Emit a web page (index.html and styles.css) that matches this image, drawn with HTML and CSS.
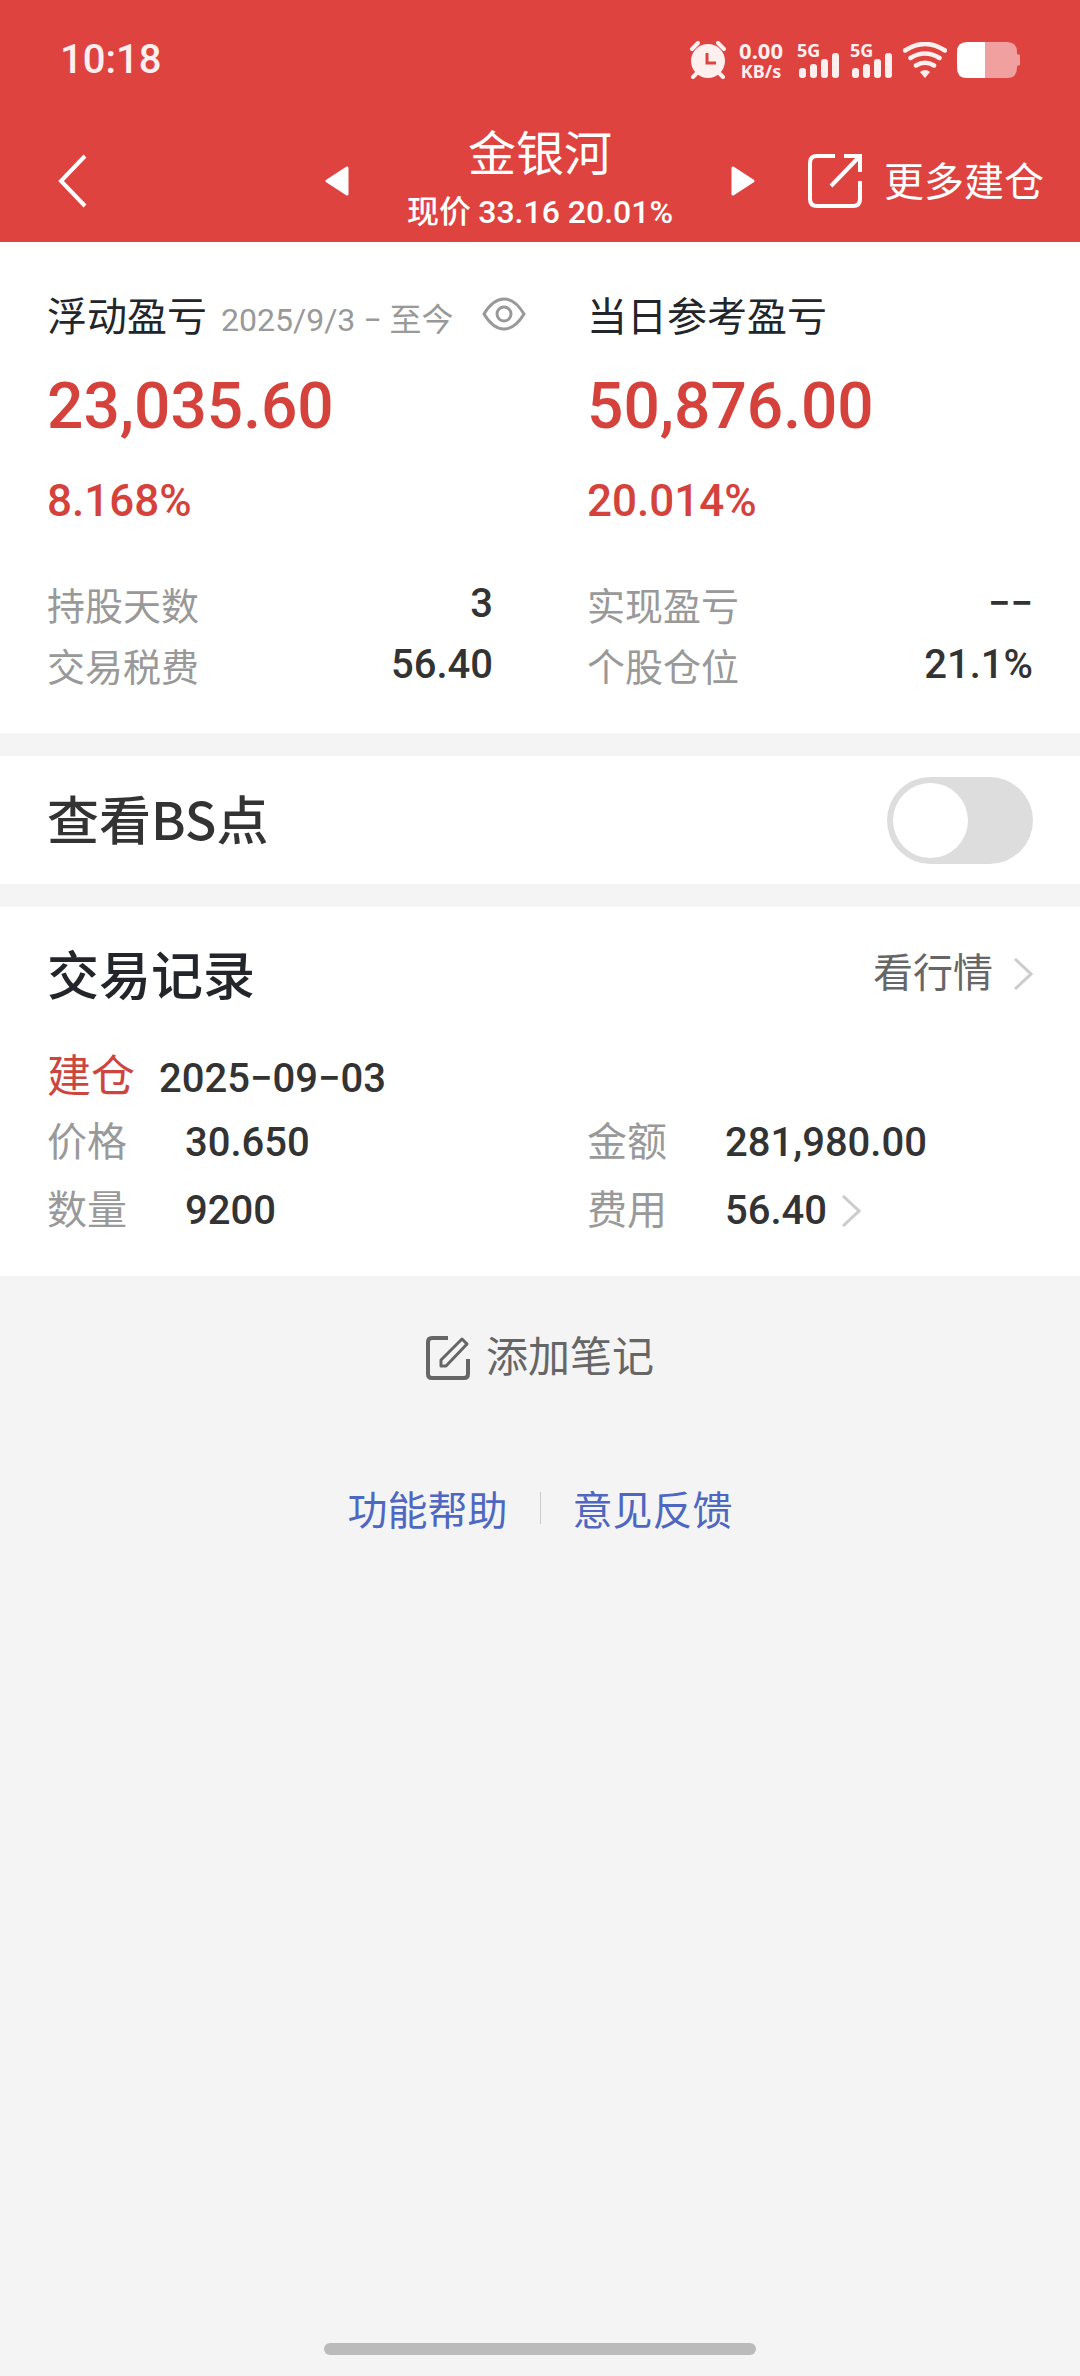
FILE: index.html
```html
<!DOCTYPE html>
<html lang="zh-CN">
  <head>
    <meta charset="UTF-8" />
    <meta name="viewport" content="width=device-width, initial-scale=1.0" />
    <title>金银河</title>
    <link rel="stylesheet" href="styles.css" />
  </head>
  <body>
    <header class="header">
      <div class="status">
        <span class="time">10:18</span>
        <div class="status_icons">
          <svg class="alarm" width="38" height="38" viewBox="0 0 38 38">
            <path d="M3 8l6-6M35 8l-6-6M8 32l-4 4M30 32l4 4" stroke="#ffefef" stroke-width="4" stroke-linecap="round" />
            <circle cx="19" cy="20" r="17" fill="#ffefef" />
            <path d="M18 12v10h9" fill="none" stroke="#de4340" stroke-width="3" />
          </svg>
          <div class="speed"><span>0.00</span><small>KB/s</small></div>
          <div class="signal">
            <span>5G</span>
            <svg width="42" height="36" viewBox="0 0 42 36" fill="#ffefef">
              <rect x="2" y="26" width="7" height="10" rx="3" />
              <rect x="13" y="22" width="7" height="14" rx="3" />
              <rect x="24" y="17" width="7" height="19" rx="3" />
              <rect x="35" y="11" width="7" height="25" rx="3" />
            </svg>
          </div>
          <div class="signal">
            <span>5G</span>
            <svg width="42" height="36" viewBox="0 0 42 36" fill="#ffefef">
              <rect x="2" y="26" width="7" height="10" rx="3" />
              <rect x="13" y="22" width="7" height="14" rx="3" />
              <rect x="24" y="17" width="7" height="19" rx="3" />
              <rect x="35" y="11" width="7" height="25" rx="3" />
            </svg>
          </div>
          <svg class="wifi" width="44" height="36" viewBox="0 0 44 36">
            <path d="M2 8.500Q22-4.500 42 8.500M7.500 16Q22 7 36.500 16M13 23.500Q22 18 31 23.500" fill="none" stroke="#ffefef" stroke-width="4.500" stroke-linecap="round" />
            <path d="M17 30q5-4 10 0l-5 6z" fill="#ffefef" />
          </svg>
          <svg class="battery" width="63" height="36" viewBox="0 0 63 36">
            <path d="M28 0h22q10 0 10 10v2l3 1v10l-3 1v2q0 10-10 10H28z" fill="#f0a09f" />
            <path d="M28 0H10Q0 0 0 10v16q0 10 10 10h18z" fill="#fff" />
          </svg>
        </div>
      </div>
      <nav class="nav">
        <button class="back" aria-label="返回">
          <svg width="30" height="54" viewBox="0 0 30 54"><path d="M27 2L3 27l24 25" fill="none" stroke="#fff" stroke-width="4" /></svg>
        </button>
        <div class="stock">
          <button aria-label="上一只">
            <svg width="24" height="30" viewBox="0 0 24 30"><path d="M2 15L22 2v26z" fill="#fff" stroke="#fff" stroke-width="3" stroke-linejoin="round" /></svg>
          </button>
          <div class="stock_info">
            <h1>金银河</h1>
            <p>现价 <span class="num">33.16 20.01%</span></p>
          </div>
          <button aria-label="下一只">
            <svg width="24" height="30" viewBox="0 0 24 30"><path d="M22 15L2 2v26z" fill="#fff" stroke="#fff" stroke-width="3" stroke-linejoin="round" /></svg>
          </button>
        </div>
        <a href="#" class="more">
          <svg width="54" height="54" viewBox="0 0 54 54" fill="none" stroke="#fff" stroke-width="4">
            <path d="M27 2H9Q2 2 2 9v36q0 7 7 7h36q7 0 7-7V27M36 2h16v16M51 3L23 32" />
          </svg>
          更多建仓
        </a>
      </nav>
    </header>

    <main>
      <section class="panel profit">
        <div class="col">
          <div class="label">
            浮动盈亏<span class="range">2025/9/3 − 至今</span>
            <button class="eye" aria-label="隐藏金额">
              <svg width="44" height="34" viewBox="0 0 44 34" fill="none" stroke="#999" stroke-width="3">
                <path d="M2 17C8 7 14 2 22 2s14 5 20 15c-6 10-12 15-20 15S8 27 2 17z" />
                <circle cx="22" cy="17" r="7" />
              </svg>
            </button>
          </div>
          <div class="big num">23,035.60</div>
          <div class="rate num">8.168%</div>
          <dl class="stats">
            <dt>持股天数</dt>
            <dd class="num">3</dd>
            <dt>交易税费</dt>
            <dd class="num">56.40</dd>
          </dl>
        </div>
        <div class="col">
          <div class="label">当日参考盈亏</div>
          <div class="big num">50,876.00</div>
          <div class="rate num">20.014%</div>
          <dl class="stats">
            <dt>实现盈亏</dt>
            <dd class="num">−−</dd>
            <dt>个股仓位</dt>
            <dd class="num">21.1%</dd>
          </dl>
        </div>
      </section>

      <section class="panel bs">
        <label for="bs">查看BS点</label>
        <input type="checkbox" id="bs" class="switch" />
      </section>

      <section class="panel record">
        <div class="record_head">
          <h2>交易记录</h2>
          <a href="#">
            看行情
            <svg width="20" height="32" viewBox="0 0 20 32"><path d="M2 1l16 15L2 31" fill="none" stroke="#ccc" stroke-width="3" /></svg>
          </a>
        </div>
        <div class="record_date"><strong>建仓</strong><span class="num">2025−09−03</span></div>
        <div class="record_body">
          <dl class="detail">
            <dt>价格</dt>
            <dd class="num">30.650</dd>
            <dt>数量</dt>
            <dd class="num">9200</dd>
          </dl>
          <dl class="detail">
            <dt>金额</dt>
            <dd class="num">281,980.00</dd>
            <dt>费用</dt>
            <dd class="num">
              56.40
              <svg width="20" height="32" viewBox="0 0 20 32"><path d="M2 1l16 15L2 31" fill="none" stroke="#ccc" stroke-width="3" /></svg>
            </dd>
          </dl>
        </div>
      </section>

      <button class="note">
        <svg width="44" height="44" viewBox="0 0 44 44" fill="none" stroke="#666" stroke-width="4">
          <path d="M22 2H6Q2 2 2 6v32q0 4 4 4h32q4 0 4-4V23" />
          <path d="M15 30v-6L36 3l5 5-21 22z" stroke-width="3" stroke-linejoin="round" />
        </svg>
        添加笔记
      </button>

      <div class="links">
        <a href="#">功能帮助</a>
        <a href="#">意见反馈</a>
      </div>
    </main>

    <div class="home_bar"></div>
  </body>
</html>
```
FILE: styles.css
```css
* {
  margin: 0;
  padding: 0;
  box-sizing: border-box;
}
body {
  display: flex;
  flex-direction: column;
  min-height: 100vh;
  background: #f4f4f4;
  color: #333;
  font-family: "Noto Sans CJK SC", sans-serif;
  font-size: 40px;
  line-height: 60px;
}
button {
  border: 0;
  background: none;
  font: inherit;
  color: inherit;
}
a {
  color: inherit;
  text-decoration: none;
}
svg {
  display: block;
  flex: none;
}
.num {
  font-family: Roboto, "Noto Sans CJK SC", sans-serif;
  font-weight: 500;
}

/* header */
.header {
  background: #de4340;
  color: #fff;
}
.status {
  display: flex;
  align-items: center;
  justify-content: space-between;
  height: 120px;
  padding: 0 60px;
  color: #ffefef;
}
.time {
  font-family: Roboto, sans-serif;
  font-size: 40px;
  font-weight: 500;
}
.status_icons {
  display: flex;
  align-items: center;
}
.speed {
  display: flex;
  flex-direction: column;
  align-items: center;
  margin: 0 14px 0 12px;
  font-family: "Noto Sans", sans-serif;
  font-size: 22px;
  font-weight: 700;
  line-height: 22px;
}
.speed small {
  font-size: 18px;
  line-height: 20px;
}
.signal {
  position: relative;
  margin-right: 11px;
}
.signal span {
  position: absolute;
  left: 0;
  top: 0;
  font-family: "Noto Sans", sans-serif;
  font-size: 18px;
  font-weight: 700;
  line-height: 16px;
}
.battery {
  margin-left: 10px;
}
.nav {
  display: grid;
  grid-template-columns: 1fr auto 1fr;
  align-items: center;
  height: 122px;
  padding: 0 36px 3px;
}
.back {
  justify-self: start;
  padding-left: 22px;
}
.stock {
  display: flex;
  align-items: center;
  gap: 58px;
}
.stock_info {
  text-align: center;
}
.stock h1 {
  font-size: 48px;
  font-weight: 400;
  line-height: 60px;
}
.stock p {
  font-size: 32px;
  font-weight: 500;
  line-height: 58px;
}
.more {
  display: flex;
  align-items: center;
  justify-self: end;
  gap: 22px;
  padding-bottom: 4px;
}
.more svg {
  margin-top: 4px;
}

/* panels */
.panel {
  margin-bottom: 23px;
  padding: 0 47px;
  background: #fff;
}
.profit,
.record_body {
  display: grid;
  grid-template-columns: minmax(0, 1fr) minmax(0, 1fr);
  column-gap: 94px;
}
.profit {
  padding-top: 42px;
  padding-bottom: 38px;
}
.label {
  display: flex;
  align-items: baseline;
  color: #222529;
  white-space: nowrap;
}
.range {
  margin-left: 14px;
  color: #999;
  font-family: Roboto, "Noto Sans CJK SC", sans-serif;
  font-size: 32px;
  line-height: 40px;
}
.eye {
  align-self: center;
  margin-left: 28px;
}
.big {
  margin-top: 21px;
  color: #d4423b;
  font-size: 64px;
  line-height: 84px;
}
.rate {
  margin-top: 22px;
  color: #d4423b;
  font-size: 44px;
  line-height: 60px;
}
.stats {
  display: grid;
  grid-template-columns: auto 1fr;
  row-gap: 1px;
  margin-top: 43px;
}
.stats dt,
.detail dt {
  color: #999;
}
.stats dt {
  font-size: 38px;
}
.stats dd {
  text-align: right;
}
.bs {
  display: flex;
  align-items: center;
  justify-content: space-between;
  height: 128px;
}
.bs label {
  padding-bottom: 4px;
  font-size: 52px;
  font-weight: 500;
}
.switch {
  appearance: none;
  width: 146px;
  height: 87px;
  padding: 6px;
  border-radius: 44px;
  background: #ddd;
}
.switch::before {
  content: "";
  display: block;
  width: 75px;
  height: 75px;
  border-radius: 50%;
  background: #fff;
}
.switch:checked {
  background: #de4340;
}
.switch:checked::before {
  margin-left: auto;
}

/* record */
.record {
  margin-bottom: 0;
  padding-top: 36px;
  padding-bottom: 35px;
}
.record_head {
  display: flex;
  align-items: center;
  justify-content: space-between;
  height: 60px;
}
.record h2 {
  color: #222529;
  font-size: 52px;
  font-weight: 500;
}
.record_head a {
  display: flex;
  align-items: center;
  gap: 20px;
  padding-bottom: 6px;
  color: #666;
}
.record_head svg {
  margin-top: 8px;
}
.record_date {
  display: flex;
  align-items: baseline;
  gap: 24px;
  margin-top: 40px;
}
.record_date strong {
  color: #cc463e;
  font-size: 44px;
  font-weight: 400;
}
.detail {
  display: grid;
  grid-template-columns: 138px 1fr;
  align-items: baseline;
  row-gap: 4px;
}
.detail dd {
  display: flex;
  align-items: center;
  gap: 14px;
}

.note {
  display: flex;
  align-items: center;
  gap: 16px;
  margin: 48px auto 0;
  color: #666;
  font-size: 42px;
}
.note svg {
  margin-top: 8px;
}
.links {
  display: flex;
  align-items: center;
  justify-content: center;
  margin-top: 108px;
  color: #4e67c0;
}
.links a {
  padding: 0 32px;
  line-height: 32px;
}
.links a + a {
  border-left: 1px solid #ccc;
}
.home_bar {
  width: 40%;
  height: 12px;
  margin: auto auto 21px;
  border-radius: 6px;
  background: #bbb;
}
```
